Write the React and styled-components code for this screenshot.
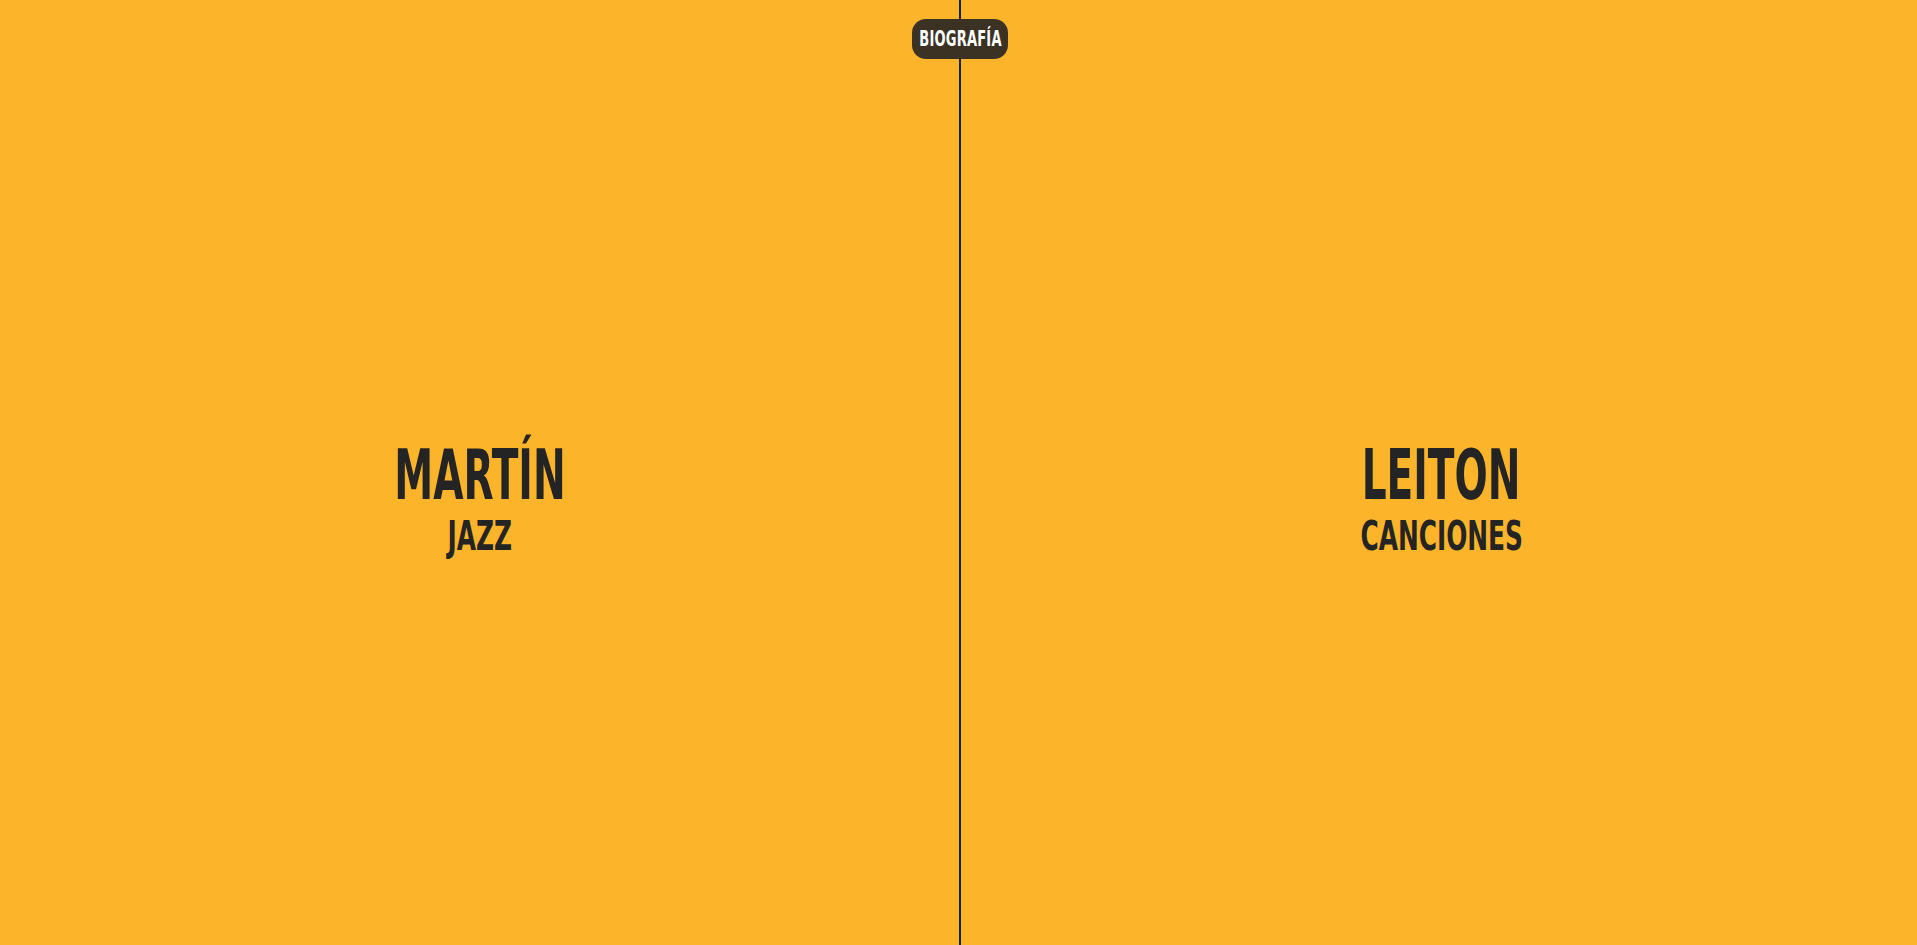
import React from "react";
import styled, { createGlobalStyle } from "styled-components";

const Global = createGlobalStyle`
  html, body { margin: 0; padding: 0; }
  body { background: #fcb52b; overflow: hidden; }
  * { box-sizing: border-box; }
`;

const Page = styled.main`
  position: relative;
  display: grid;
  grid-template-columns: 959px 2px 1fr;
  width: 100vw;
  height: 945px;
  background: #fcb52b;
  font-family: "DejaVu Sans Condensed", "Liberation Sans Narrow", "Liberation Sans", sans-serif;
  font-weight: 700;
  color: #242424;
`;

const Panel = styled.section`
  display: flex;
  flex-direction: column;
  align-items: center;
  justify-content: center;
  padding-top: 55px;
  padding-left: ${(p) => p.$shift || 0}px;
`;

const Divider = styled.div`
  background: #222;
`;

const Title = styled.h1`
  margin: 0;
  font-size: 69px;
  line-height: 52px;
  font-weight: 700;
  text-transform: uppercase;
  transform: scaleX(0.63);
  white-space: nowrap;
`;

const Sub = styled.h2`
  margin: 20px 0 0;
  font-size: 40px;
  line-height: 30px;
  font-weight: 700;
  text-transform: uppercase;
  transform: scaleX(0.69);
  white-space: nowrap;
`;

const Badge = styled.a`
  position: absolute;
  top: 19px;
  left: 912px;
  width: 96px;
  height: 40px;
  border-radius: 14px;
  background: #3b3224;
  color: #fff;
  display: flex;
  align-items: center;
  justify-content: center;
  text-decoration: none;
`;

const BadgeText = styled.span`
  font-size: 22px;
  line-height: 22px;
  font-weight: 700;
  transform: scaleX(0.66);
  white-space: nowrap;
  letter-spacing: 0.3px;
`;

export default function App() {
  return (
    <>
      <Global />
      <Page>
        <Panel>
          <Title>Martín</Title>
          <Sub>Jazz</Sub>
        </Panel>
        <Divider />
        <Panel $shift={5}>
          <Title>Leiton</Title>
          <Sub>Canciones</Sub>
        </Panel>
        <Badge href="#">
          <BadgeText>BIOGRAFÍA</BadgeText>
        </Badge>
      </Page>
    </>
  );
}
